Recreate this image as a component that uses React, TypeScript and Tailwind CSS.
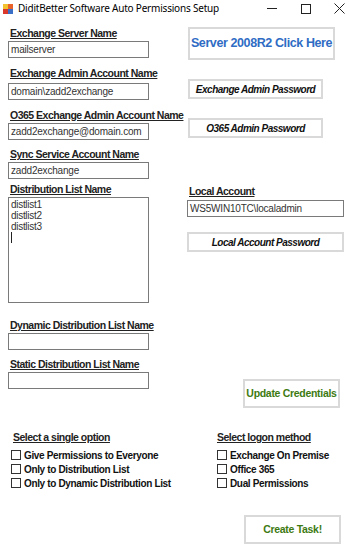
const Label = ({ children, className = "" }: { children: string; className?: string }) => (
  <div className={`whitespace-nowrap text-[10.5px] leading-[12px] font-bold underline tracking-[-0.5px] text-[#222] ${className}`}>{children}</div>
);

const TextBox = ({ value = "", className = "" }: { value?: string; className?: string }) => (
  <div className={`h-[17px] border border-[#7a7a7a] bg-white px-[2px] text-[10px] leading-[15px] text-[#333] tracking-[-0.2px] whitespace-nowrap ${className}`}>
    {value}
  </div>
);

const Button = ({ children, className = "" }: { children: string; className?: string }) => (
  <div className={`flex items-center justify-center whitespace-nowrap border-2 border-[#d9d9d9] bg-white ${className}`}>{children}</div>
);

const Check = ({ label }: { label: string }) => (
  <div className="flex items-center h-[14px] gap-[3px]">
    <div className="w-[10px] h-[10px] border border-[#333] bg-white" />
    <span className="whitespace-nowrap text-[10px] font-bold tracking-[-0.35px] text-[#111]">{label}</span>
  </div>
);

export default function App() {
  return (
    <div className="w-[350px] h-[550px] bg-white overflow-hidden" style={{ fontFamily: '"Liberation Sans", Arial, sans-serif' }}>
      {/* title bar */}
      <div className="flex items-center h-[17px]">
        <svg width="10" height="10" viewBox="0 0 10 10" className="ml-[3px]">
          <rect x="0" y="0" width="5" height="5" fill="#f2c230" />
          <rect x="5" y="0" width="5" height="5" fill="#e8622a" />
          <rect x="0" y="5" width="5" height="5" fill="#d9382a" />
          <rect x="5" y="5" width="5" height="5" fill="#3a6fc8" />
        </svg>
        <span className="ml-[5px] text-[10px] tracking-[-0.2px] text-black" style={{ fontFamily: '"Noto Sans", sans-serif' }}>
          DiditBetter Software Auto Permissions Setup
        </span>
        <div className="ml-auto flex items-center">
          <div className="w-[10px] h-[1px] bg-[#222] mr-[24px]" />
          <div className="w-[10px] h-[10px] border border-[#222] mr-[23px]" />
          <svg width="11" height="11" viewBox="0 0 11 11" className="mr-[5px]">
            <path d="M0.5 0.5 L10.5 10.5 M10.5 0.5 L0.5 10.5" stroke="#222" strokeWidth="1" />
          </svg>
        </div>
      </div>

      {/* main two columns */}
      <div className="flex mt-[10px]">
        <div className="flex flex-col w-[141px] ml-[8px]">
          <Label className="ml-[2px]">Exchange Server Name</Label>
          <TextBox value="mailserver" className="mt-[2px]" />
          <Label className="ml-[2px] mt-[9px]">Exchange Admin Account Name</Label>
          <TextBox value="domain\zadd2exchange" className="mt-[4px]" />
          <Label className="ml-[2px] mt-[9px]">O365 Exchange Admin Account Name</Label>
          <TextBox value="zadd2exchange@domain.com" className="mt-[2px]" />
          <Label className="ml-[2px] mt-[8px]">Sync Service Account Name</Label>
          <TextBox value="zadd2exchange" className="mt-[2px]" />
          <Label className="ml-[2px] mt-[4px]">Distribution List Name</Label>
          <div className="mt-[2px] h-[106px] border border-[#7a7a7a] bg-white px-[2px] pt-[1px] text-[10px] leading-[11px] text-[#333] tracking-[-0.3px]">
            <div>distlist1</div>
            <div>distlist2</div>
            <div>distlist3</div>
            <div className="w-[1px] h-[11px] bg-[#222]" />
          </div>
          <Label className="ml-[2px] mt-[16px]">Dynamic Distribution List Name</Label>
          <TextBox className="mt-[2px]" />
          <Label className="ml-[2px] mt-[8px]">Static Distribution List Name</Label>
          <TextBox className="mt-[2px]" />
        </div>

        <div className="flex flex-col ml-[39px]">
          <Button className="w-[147px] h-[33px] text-[12.5px] font-bold text-[#2f6cc4] tracking-[-0.4px]">Server 2008R2 Click Here</Button>
          <Button className="mt-[19px] w-[135px] h-[20px] text-[10px] font-bold italic text-[#111] tracking-[-0.5px]">Exchange Admin Password</Button>
          <Button className="mt-[19px] w-[135px] h-[20px] text-[10px] font-bold italic text-[#111] tracking-[-0.5px]">O365 Admin Password</Button>
          <Label className="mt-[47px] ml-[1px]">Local Account</Label>
          <TextBox value="WS5WIN10TC\localadmin" className="mt-[3px] w-[157px] -ml-[1px]" />
          <Button className="mt-[15px] w-[157px] h-[20px] -ml-[1px] text-[10px] font-bold italic text-[#111] tracking-[-0.5px]">Local Account Password</Button>
          <Button className="mt-[127px] ml-[55px] w-[97px] h-[29px] text-[10.5px] font-bold text-[#3d7a12] tracking-[-0.3px]">Update Credentials</Button>
        </div>
      </div>

      {/* options */}
      <div className="flex mt-[23px]">
        <div className="flex flex-col ml-[11px] w-[203px]">
          <Label className="ml-[2px] mb-[5px]">Select a single option</Label>
          <Check label="Give Permissions to Everyone" />
          <Check label="Only to Distribution List" />
          <Check label="Only to Dynamic Distribution List" />
        </div>
        <div className="flex flex-col ml-[3px]">
          <Label className="mb-[5px]">Select logon method</Label>
          <Check label="Exchange On Premise" />
          <Check label="Office 365" />
          <Check label="Dual Permissions" />
        </div>
      </div>

      <div className="flex mt-[25px]">
        <Button className="ml-[244px] w-[97px] h-[29px] text-[10.5px] font-bold text-[#3d7a12] tracking-[-0.3px]">Create Task!</Button>
      </div>
    </div>
  );
}
